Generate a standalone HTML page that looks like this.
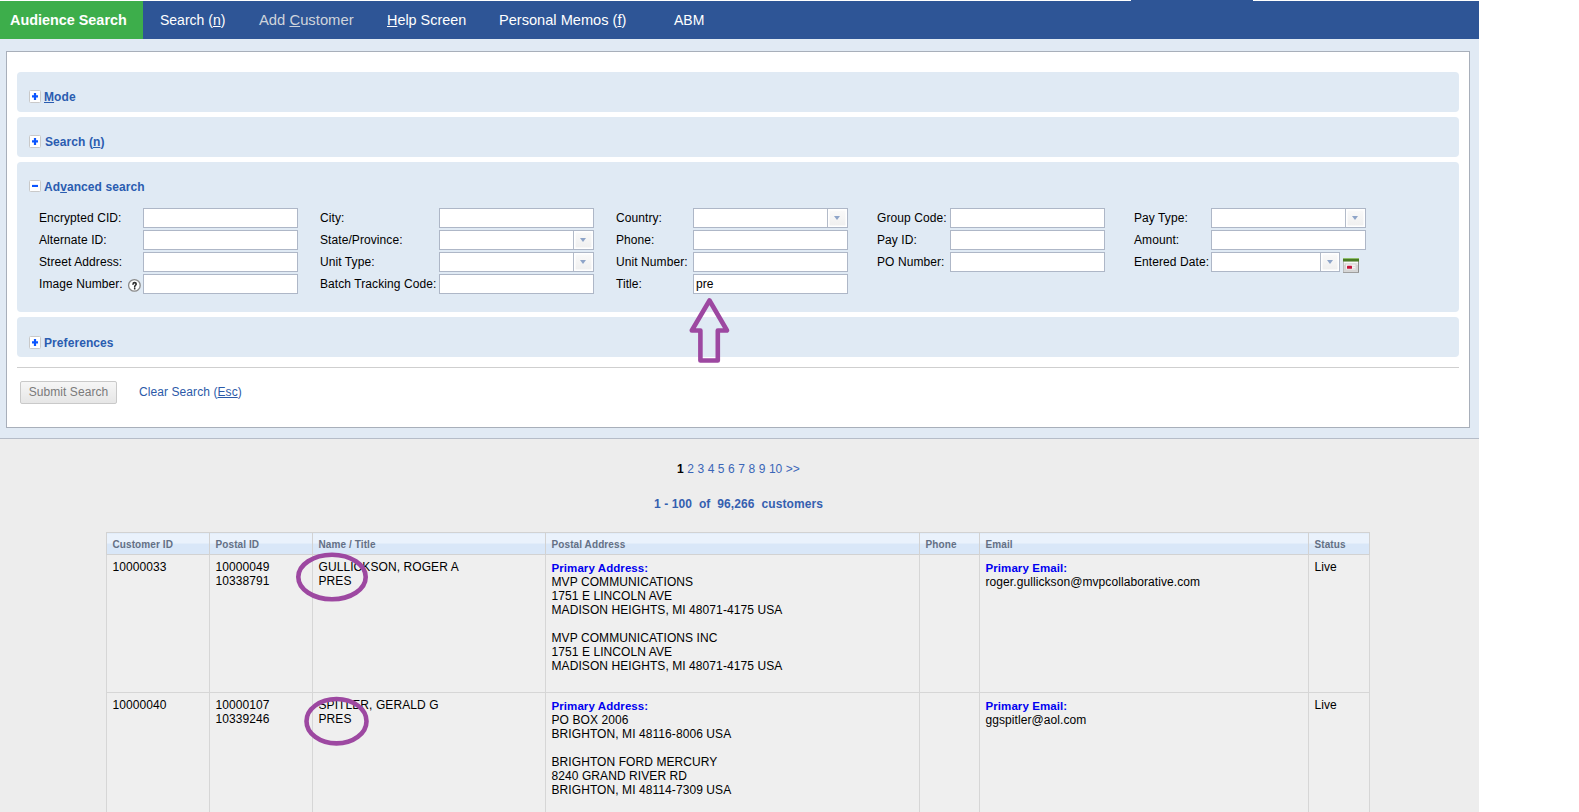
<!DOCTYPE html>
<html><head><meta charset="utf-8">
<style>
*{margin:0;padding:0;box-sizing:border-box}
html,body{width:1579px;height:812px;overflow:hidden;background:#fff;font-family:"Liberation Sans",sans-serif;font-size:12px;color:#000;letter-spacing:0.08px}
.a{position:absolute;white-space:nowrap}
#nav{position:absolute;left:0;top:1px;width:1479px;height:38px;background:#2e5596}
#navtop{position:absolute;left:1131px;top:0;width:122px;height:1px;background:#2e5596}
#green{position:absolute;left:0;top:1px;width:143px;height:38px;background:#3dae4b}
.nv{position:absolute;top:12px;color:#fff;font-size:14px;line-height:16px;letter-spacing:0}
.nv u{text-decoration:underline;text-underline-offset:1px}
#lb{position:absolute;left:0;top:39px;width:1479px;height:400px;background:#e1eaf4;border-bottom:1px solid #b5bcc8}
#panel{position:absolute;left:6px;top:51px;width:1464px;height:377px;background:#fff;border:1px solid #a8afba}
.sec{position:absolute;left:17px;width:1442px;background:#e0eaf4;border-radius:4px}
.ico{position:absolute;left:29px;width:12px;height:13px;background:#fff;border:1px solid #c9c9c9;border-radius:1.5px}
.ico svg{position:absolute;left:0;top:0}
.sh{position:absolute;left:44px;font-weight:bold;font-size:12px;color:#2a5cb0;line-height:14px}
.sh u{text-decoration:underline}
.lbl{position:absolute;font-size:12px;line-height:14px;color:#000}
.inp{position:absolute;width:155px;height:20px;background:#fff;border:1px solid #aeb7c7}
.dd{position:absolute;top:0;right:0;width:20px;height:18px;border-left:1px solid #b3bbc9;background:linear-gradient(#fafafa,#efefef);box-shadow:inset 0 0 0 1.5px #fff}
.dd:after{content:"";position:absolute;left:6px;top:7px;border-left:3.5px solid transparent;border-right:3.5px solid transparent;border-top:4px solid #8ea4c8}
#hr{position:absolute;left:17px;top:367px;width:1442px;height:1px;background:#cfcfcf}
#btn{position:absolute;left:20px;top:381px;width:97px;height:23px;border:1px solid #c9c9c9;border-radius:2px;background:linear-gradient(#f6f6f6,#e6e6e6);color:#7a7a7a;font-size:12px;line-height:21px;text-align:center}
#gray{position:absolute;left:0;top:439px;width:1479px;height:373px;background:#ededed}
table{position:absolute;left:106px;top:532px;border-collapse:collapse;table-layout:fixed}
th{height:22px;border:1px solid #d2d2d2;background:linear-gradient(#eaf2fc 0,#eaf2fc 9.5px,#d9e7f8 10.5px,#d9e7f8 100%);color:#647085;font-size:10px;font-weight:bold;text-align:left;padding:6px 0 0 5.5px;letter-spacing:0.1px;vertical-align:top;line-height:12px}
td{border:1px solid #d6d6d6;background:#efefef;vertical-align:top;padding:5px 6px 0 5.5px;line-height:14px;font-size:12px}
td.ad{padding-top:6px}
.pa{color:#0000f0;font-weight:bold;font-size:11.5px}
.val{position:absolute;left:2px;top:2px;font-size:12px;line-height:14px}
#help{position:absolute;left:127px;top:278px}
#cal{position:absolute;left:1343px;top:258px}
</style></head><body>
<div id="navtop"></div>
<div id="nav"></div>
<div id="green"></div>
<div class="nv" style="left:10px;font-weight:bold;font-size:14.4px">Audience Search</div>
<div class="nv" style="left:160px">Search (<u>n</u>)</div>
<div class="nv" style="left:259px;color:#cfd4dc;font-size:14.8px">Add <u>C</u>ustomer</div>
<div class="nv" style="left:387px;font-size:14.4px"><u>H</u>elp Screen</div>
<div class="nv" style="left:499px;font-size:14.6px">Personal Memos (<u>f</u>)</div>
<div class="nv" style="left:674px">ABM</div>

<div id="lb"></div>
<div id="panel"></div>

<div class="sec" style="top:72px;height:40px"></div>
<div class="ico" style="top:90px"><svg width="10" height="11"><path fill="#0b55ff" d="M2 4.3h6v2.2h-6zM3.9 2h2.2v7h-2.2z"/></svg></div>
<div class="sh" style="top:90px"><u>M</u>ode</div>

<div class="sec" style="top:117px;height:40px"></div>
<div class="ico" style="top:135px"><svg width="10" height="11"><path fill="#0b55ff" d="M2 4.3h6v2.2h-6zM3.9 2h2.2v7h-2.2z"/></svg></div>
<div class="sh" style="top:135px;left:45px">Search (<u>n</u>)</div>

<div class="sec" style="top:162px;height:150px"></div>
<div class="ico" style="top:180px;height:12px"><svg width="10" height="10"><path fill="#0b55ff" d="M2 3.9h6v2.1h-6z"/></svg></div>
<div class="sh" style="top:180px">Ad<u>v</u>anced search</div>
<div class="lbl a" style="left:39px;top:211px">Encrypted CID:</div>
<div class="inp" style="left:143px;top:208px;"></div>
<div class="lbl a" style="left:39px;top:233px">Alternate ID:</div>
<div class="inp" style="left:143px;top:230px;"></div>
<div class="lbl a" style="left:39px;top:255px">Street Address:</div>
<div class="inp" style="left:143px;top:252px;"></div>
<div class="lbl a" style="left:39px;top:277px">Image Number:</div>
<div class="inp" style="left:143px;top:274px;"></div>
<div class="lbl a" style="left:320px;top:211px">City:</div>
<div class="inp" style="left:439px;top:208px;"></div>
<div class="lbl a" style="left:320px;top:233px">State/Province:</div>
<div class="inp" style="left:439px;top:230px;"><div class="dd"></div></div>
<div class="lbl a" style="left:320px;top:255px">Unit Type:</div>
<div class="inp" style="left:439px;top:252px;"><div class="dd"></div></div>
<div class="lbl a" style="left:320px;top:277px">Batch Tracking Code:</div>
<div class="inp" style="left:439px;top:274px;"></div>
<div class="lbl a" style="left:616px;top:211px">Country:</div>
<div class="inp" style="left:693px;top:208px;"><div class="dd"></div></div>
<div class="lbl a" style="left:616px;top:233px">Phone:</div>
<div class="inp" style="left:693px;top:230px;"></div>
<div class="lbl a" style="left:616px;top:255px">Unit Number:</div>
<div class="inp" style="left:693px;top:252px;"></div>
<div class="lbl a" style="left:616px;top:277px">Title:</div>
<div class="inp" style="left:693px;top:274px;"><span class="val">pre</span></div>
<div class="lbl a" style="left:877px;top:211px">Group Code:</div>
<div class="inp" style="left:950px;top:208px;"></div>
<div class="lbl a" style="left:877px;top:233px">Pay ID:</div>
<div class="inp" style="left:950px;top:230px;"></div>
<div class="lbl a" style="left:877px;top:255px">PO Number:</div>
<div class="inp" style="left:950px;top:252px;"></div>
<div class="lbl a" style="left:1134px;top:211px">Pay Type:</div>
<div class="inp" style="left:1211px;top:208px;"><div class="dd"></div></div>
<div class="lbl a" style="left:1134px;top:233px">Amount:</div>
<div class="inp" style="left:1211px;top:230px;"></div>
<div class="lbl a" style="left:1134px;top:255px">Entered Date:</div>
<div class="inp" style="left:1211px;top:252px;width:129px;"><div class="dd" style="width:19px"></div></div>
<svg id="help" width="15" height="15" viewBox="0 0 15 15"><circle cx="7.4" cy="7.4" r="5.8" fill="#fff" stroke="#8a8a8a" stroke-width="1.3"/><path d="M6 6.2C6 5.1 6.7 4.6 7.6 4.6C8.6 4.6 9.2 5.2 9.2 6C9.2 7 8.1 7.3 7.8 8.2L7.7 9" fill="none" stroke="#2e2e2e" stroke-width="1.55" stroke-linecap="round"/><circle cx="7.7" cy="10.7" r="0.85" fill="#2e2e2e"/></svg>
<svg id="cal" width="16" height="15" viewBox="0 0 16 15"><rect x="0" y="0" width="16" height="8" fill="#e8e8e8"/><rect x="0" y="7" width="16" height="8" fill="#d6d6d6"/><rect x="0" y="0" width="1" height="15" fill="#bdbdbd"/><rect x="15" y="0" width="1" height="15" fill="#8c8c8c"/><rect x="0" y="14" width="16" height="1" fill="#9e9e9e"/><rect x="0" y="0" width="16" height="1" fill="#8fbf6a"/><rect x="0" y="1" width="16" height="2.5" fill="#4b7c26"/><rect x="1" y="4" width="14" height="1" fill="#f8f8f8"/><rect x="2.5" y="6" width="10.5" height="6" fill="#f2f2f2" stroke="#d4d4d4" stroke-width="1"/><rect x="4" y="7.8" width="5" height="3" rx="0.5" fill="#c4123a"/><rect x="9.5" y="8" width="3" height="0.8" fill="#dcdcdc"/><rect x="9.5" y="10" width="3" height="0.8" fill="#dcdcdc"/></svg>

<div class="sec" style="top:317px;height:40px"></div>
<div class="ico" style="top:336px"><svg width="10" height="11"><path fill="#0b55ff" d="M2 4.3h6v2.2h-6zM3.9 2h2.2v7h-2.2z"/></svg></div>
<div class="sh" style="top:336px">Preferences</div>

<div id="hr"></div>
<div id="btn">Submit Search</div>
<div class="a" style="left:139px;top:385px;color:#2c5aa8;line-height:14px">Clear Search (<u>Esc</u>)</div>

<div id="gray"></div>

<div class="a" style="left:677px;top:462px;line-height:14px;color:#3a66b8;word-spacing:0.2px;letter-spacing:0"><b style="color:#000">1</b> 2 3 4 5 6 7 8 9 10 &gt;&gt;</div>
<div class="a" style="left:654px;top:497px;line-height:14px;color:#3560b0;font-weight:bold;letter-spacing:0.1px">1 - 100 &nbsp;of &nbsp;96,266 &nbsp;customers</div>
<table>
<colgroup><col style="width:103px"><col style="width:103px"><col style="width:233px"><col style="width:374px"><col style="width:60px"><col style="width:329px"><col style="width:61px"></colgroup>
<tr><th>Customer ID</th><th>Postal ID</th><th>Name / Title</th><th>Postal Address</th><th>Phone</th><th>Email</th><th>Status</th></tr>
<tr style="height:138px"><td>10000033</td><td>10000049<br>10338791</td><td>GULLICKSON, ROGER A<br>PRES</td><td class="ad"><span class="pa">Primary Address:</span><br>MVP COMMUNICATIONS<br>1751 E LINCOLN AVE<br>MADISON HEIGHTS, MI 48071-4175 USA<br><br>MVP COMMUNICATIONS INC<br>1751 E LINCOLN AVE<br>MADISON HEIGHTS, MI 48071-4175 USA</td><td></td><td class="ad"><span class="pa">Primary Email:</span><br>roger.gullickson@mvpcollaborative.com</td><td>Live</td></tr>
<tr style="height:140px"><td>10000040</td><td>10000107<br>10339246</td><td>SPITLER, GERALD G<br>PRES</td><td class="ad"><span class="pa">Primary Address:</span><br>PO BOX 2006<br>BRIGHTON, MI 48116-8006 USA<br><br>BRIGHTON FORD MERCURY<br>8240 GRAND RIVER RD<br>BRIGHTON, MI 48114-7309 USA</td><td></td><td class="ad"><span class="pa">Primary Email:</span><br>ggspitler@aol.com</td><td>Live</td></tr>
</table>
<svg class="a" style="left:0;top:0" width="1579" height="812" viewBox="0 0 1579 812">
<g fill="none" stroke="#9d48a1" stroke-width="4.6">
<polygon points="709.5,300.5 727,330.5 717.8,330.5 717.8,360.5 700.4,360.5 700.4,330.5 691.8,330.5" stroke-linejoin="round"/>
<ellipse cx="332" cy="577" rx="33.7" ry="22.3"/>
<ellipse cx="336.5" cy="721.2" rx="30" ry="22.2"/>
</g>
</svg>
</body></html>
